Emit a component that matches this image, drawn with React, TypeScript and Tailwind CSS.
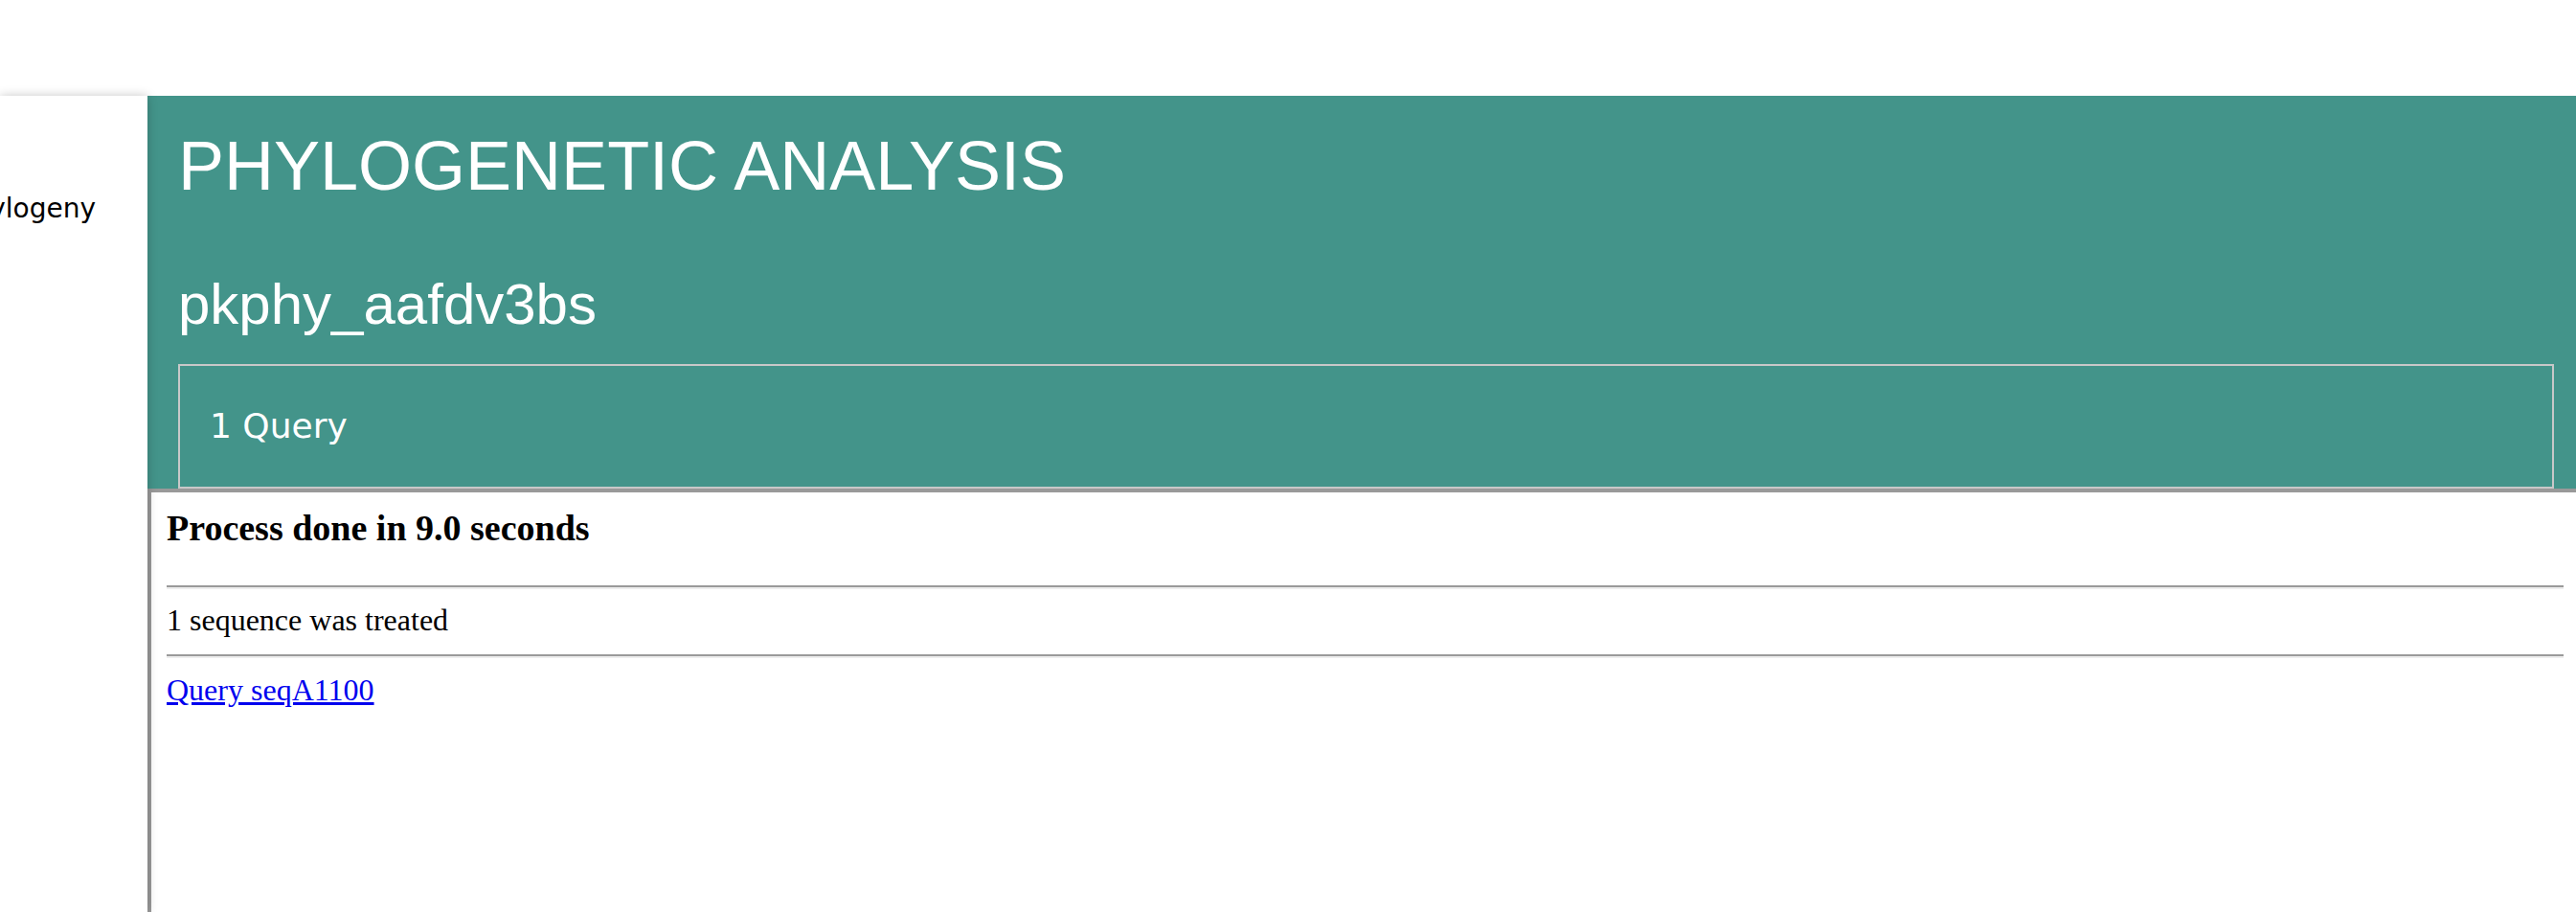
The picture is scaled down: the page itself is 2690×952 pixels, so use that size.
export default function App() {
  return (
    <div className="flex min-h-[952px] flex-col bg-white">
      {/* blank strip above the app */}
      <div className="h-[100px] shrink-0 bg-white" />

      <div className="flex flex-1">
        <aside className="relative z-10 flex w-[154px] shrink-0 justify-end overflow-hidden bg-white pr-[54px] pt-[102px] shadow-[0_0_10px_rgba(0,0,0,0.22)]">
          <span className="whitespace-nowrap font-['DejaVu_Sans',sans-serif] text-[28px] leading-[32px] text-black">
            Phylogeny
          </span>
        </aside>

        <main className="flex flex-1 flex-col">
          <header className="bg-[#43948a] pl-[32px] pr-[23px] pt-[32px] text-white">
            <h1 className="font-['Liberation_Sans',Arial,sans-serif] text-[72px] font-normal leading-[82px]">
              PHYLOGENETIC ANALYSIS
            </h1>
            <h2 className="mt-[69px] font-['Liberation_Sans',Arial,sans-serif] text-[60px] font-normal leading-[69px]">
              pkphy_aafdv3bs
            </h2>
            <div className="mt-[28px] flex h-[130px] items-center border-2 border-[#c8c8c8] pl-[31px]">
              <span className="font-['DejaVu_Sans',sans-serif] text-[36px] leading-[40px]">1 Query</span>
            </div>
          </header>

          <section className="flex-1 border-l-4 border-t-4 border-[#999999] bg-white pl-[16px] pr-[13px] pt-[16px] font-['Liberation_Serif','Times_New_Roman',serif] text-black">
            <h3 className="text-[38px] font-bold leading-[43px]">Process done in 9.0 seconds</h3>
            <hr className="mt-[38px] border-b-2 border-t-2 border-b-[#eeeeee] border-t-[#9a9a9a]" />
            <div className="mt-[14px] text-[32px] leading-[37px]">1 sequence was treated</div>
            <hr className="mt-[17px] border-b-2 border-t-2 border-b-[#eeeeee] border-t-[#9a9a9a]" />
            <div className="mt-[15px] text-[32px] leading-[37px]">
              <a href="#seqA1100" className="text-[#0000ee] underline">
                Query seqA1100
              </a>
            </div>
          </section>
        </main>
      </div>
    </div>
  );
}
